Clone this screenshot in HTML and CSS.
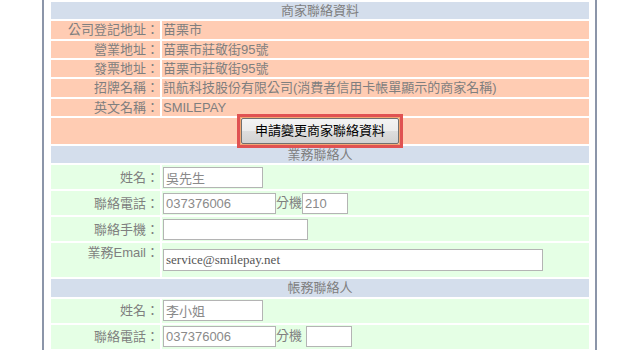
FILE: index.html
```html
<!DOCTYPE html>
<html lang="zh-Hant">
<head>
<meta charset="utf-8">
<link rel="stylesheet" href="styles.css">
</head>
<body>
<div class="page">
<table class="form">
<colgroup><col class="c-label"><col class="c-value"></colgroup>
<tr class="head"><td colspan="2">商家聯絡資料</td></tr>
<tr class="shop"><td class="label">公司登記地址：</td><td class="value">苗栗市</td></tr>
<tr class="shop"><td class="label">營業地址：</td><td class="value">苗栗市莊敬街95號</td></tr>
<tr class="shop"><td class="label">發票地址：</td><td class="value">苗栗市莊敬街95號</td></tr>
<tr class="shop"><td class="label">招牌名稱：</td><td class="value">訊航科技股份有限公司(消費者信用卡帳單顯示的商家名稱)</td></tr>
<tr class="shop"><td class="label">英文名稱：</td><td class="value">SMILEPAY</td></tr>
<tr class="shop btn-row"><td colspan="2"><span class="ring"><button class="apply" type="button">申請變更商家聯絡資料</button></span></td></tr>
<tr class="head"><td colspan="2">業務聯絡人</td></tr>
<tr class="contact"><td class="label">姓名：</td><td class="value"><input class="in in-name" type="text" value="吳先生"></td></tr>
<tr class="contact"><td class="label">聯絡電話：</td><td class="value"><input class="in in-phone" type="text" value="037376006">分機<input class="in in-ext" type="text" value="210"></td></tr>
<tr class="contact"><td class="label">聯絡手機：</td><td class="value"><input class="in in-mobile" type="text" value=""></td></tr>
<tr class="contact email-row"><td class="label">業務Email：</td><td class="value"><input class="in in-email" type="text" value="service@smilepay.net"></td></tr>
<tr class="head"><td colspan="2">帳務聯絡人</td></tr>
<tr class="contact"><td class="label">姓名：</td><td class="value"><input class="in in-name" type="text" value="李小姐"></td></tr>
<tr class="contact"><td class="label">聯絡電話：</td><td class="value"><input class="in in-phone" type="text" value="037376006">分機 <input class="in in-ext" type="text" value=""></td></tr>
</table>
</div>
</body>
</html>
```

FILE: styles.css
```css
html, body {
  margin: 0;
  padding: 0;
  background: #ffffff;
}

body {
  font-family: "Liberation Sans", "Noto Sans CJK TC", sans-serif;
  font-size: 13px;
  color: #7f7f7f;
}

.page {
  margin-left: 42px;
  width: 551px;
  min-height: 100vh;
  border-left: 2px solid #8b95a9;
  border-right: 2px solid #8b95a9;
}

.form {
  margin-left: 5px;
  width: 542px;
  table-layout: fixed;
  border-collapse: separate;
  border-spacing: 2px;
}

.c-label { width: 109px; }
.c-value { width: 427px; }

.form td {
  padding: 0;
  line-height: 17.33px;
  height: 17.33px;
  white-space: nowrap;
}

.head td {
  background: #d4deec;
  text-align: center;
}

.shop td { background: #ffccb3; }
.contact td { background: #e5ffe5; }

.label {
  text-align: right;
  padding-right: 1px !important;
}

.value {
  padding-left: 1px !important;
}

.btn-row td {
  height: 26px;
  line-height: 0;
  text-align: center;
}

.ring {
  position: relative;
  z-index: 1;
  display: inline-block;
  vertical-align: top;
  line-height: 0;
  box-shadow: 0 0 0 1px #f3a673, 0 0 0 4px #e05252;
}

.apply {
  width: 158px;
  height: 26px;
  margin: 0;
  padding: 0;
  border: 1px solid #707070;
  border-radius: 2px;
  background: linear-gradient(#f3f3f3, #ececec 50%, #dedede 50%, #d2d2d2);
  font-family: "Liberation Sans", "Noto Sans CJK TC", sans-serif;
  font-size: 13px;
  line-height: 24px;
  color: #000000;
  vertical-align: top;
}

.contact td {
  height: 24px;
  line-height: 17px;
}

.email-row .label {
  height: 33px;
  vertical-align: top;
  padding-top: 1px !important;
}

.email-row .value {
  height: 28px;
  vertical-align: top;
  padding-top: 6px !important;
}

.in {
  box-sizing: border-box;
  height: 21px;
  margin: 0;
  padding: 0 2px;
  border: 1px solid #b4b4b4;
  background: #ffffff;
  font-family: "Liberation Sans", "Noto Sans CJK TC", sans-serif;
  font-size: 13px;
  color: #8a8a8a;
  vertical-align: middle;
  outline: none;
}

.in-name { width: 100px; }
.in-phone { width: 113px; }
.in-ext { width: 46px; }
.in-mobile { width: 145px; }

.in-email {
  display: block;
  width: 380px;
  height: 22px;
  font-family: "Liberation Serif", "Noto Sans CJK TC", serif;
  color: #555555;
}
```
